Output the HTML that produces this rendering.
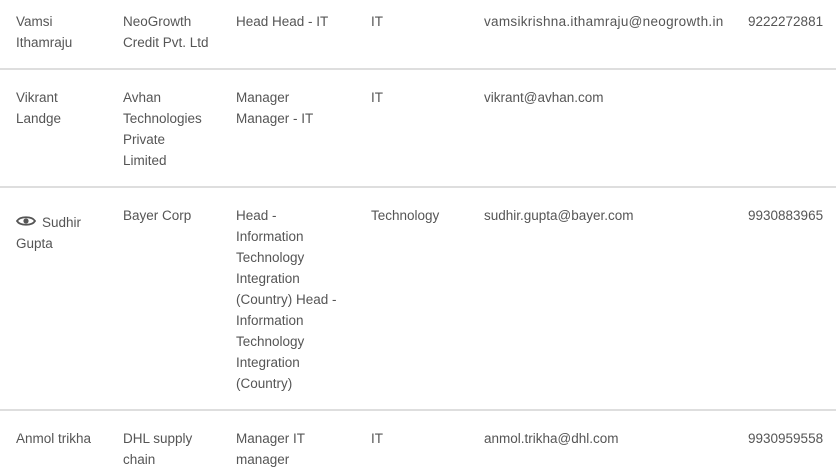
<!DOCTYPE html>
<html><head><meta charset="utf-8"><style>
body{margin:0;width:836px;height:476px;overflow:hidden;background:#fff;font-family:"Liberation Sans",sans-serif;font-size:13.5px;color:#555;}
.t{position:absolute;line-height:21px;}
.b{position:absolute;left:0;width:836px;height:2px;background:#dedede;}
</style></head><body>
<div class="t" style="left:16px;top:11px">Vamsi<br>Ithamraju</div>
<div class="t" style="left:123px;top:11px">NeoGrowth<br>Credit Pvt. Ltd</div>
<div class="t" style="left:236px;top:11px">Head Head - IT</div>
<div class="t" style="left:371px;top:11px">IT</div>
<div class="t" style="left:484px;top:11px;letter-spacing:0.3px">vamsikrishna.ithamraju@neogrowth.in</div>
<div class="t" style="left:748px;top:11px">9222272881</div>
<div class="b" style="top:68px"></div>
<div class="t" style="left:16px;top:87px">Vikrant<br>Landge</div>
<div class="t" style="left:123px;top:87px">Avhan<br>Technologies<br>Private<br>Limited</div>
<div class="t" style="left:236px;top:87px">Manager<br>Manager - IT</div>
<div class="t" style="left:371px;top:87px">IT</div>
<div class="t" style="left:484px;top:87px">vikrant@avhan.com</div>
<div class="b" style="top:186px"></div>
<svg style="position:absolute;left:16px;top:214px" width="20" height="14" viewBox="0 0 20 14"><path d="M1 7C4 2 16 2 19 7C16 12 4 12 1 7Z" fill="none" stroke="#555" stroke-width="1.8"/><circle cx="10" cy="7" r="2.6" fill="#555"/></svg>
<div class="t" style="left:16px;top:212px"><span style="margin-left:26px">Sudhir</span><br>Gupta</div>
<div class="t" style="left:123px;top:205px">Bayer Corp</div>
<div class="t" style="left:236px;top:205px">Head -<br>Information<br>Technology<br>Integration<br>(Country) Head -<br>Information<br>Technology<br>Integration<br>(Country)</div>
<div class="t" style="left:371px;top:205px">Technology</div>
<div class="t" style="left:484px;top:205px">sudhir.gupta@bayer.com</div>
<div class="t" style="left:748px;top:205px">9930883965</div>
<div class="b" style="top:409px"></div>
<div class="t" style="left:16px;top:428px">Anmol trikha</div>
<div class="t" style="left:123px;top:428px">DHL supply<br>chain</div>
<div class="t" style="left:236px;top:428px">Manager IT<br>manager</div>
<div class="t" style="left:371px;top:428px">IT</div>
<div class="t" style="left:484px;top:428px">anmol.trikha@dhl.com</div>
<div class="t" style="left:748px;top:428px">9930959558</div>
</body></html>
